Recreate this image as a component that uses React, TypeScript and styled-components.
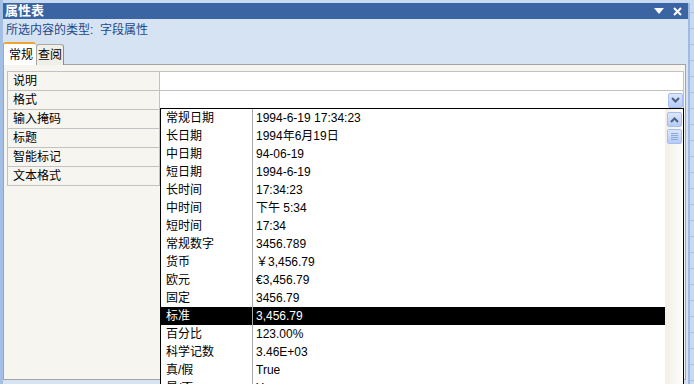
import { Fragment } from 'react'
import styled, { createGlobalStyle } from 'styled-components'

const GlobalStyle = createGlobalStyle`
  html, body {
    margin: 0;
    padding: 0;
  }
  body {
    width: 694px;
    height: 384px;
    overflow: hidden;
    background: #c8daf1;
    font-family: "Liberation Sans", "Noto Sans CJK SC", sans-serif;
    font-size: 12px;
    line-height: 14px;
    color: #000;
  }
`

const Frame = styled.div`
  position: relative;
  width: 694px;
  height: 384px;
  overflow: hidden;
  box-sizing: border-box;
  padding-top: 3px;
  border-left: 3px solid #a3bfe6;
  background: #c8daf1;

  &::after {
    content: '';
    position: absolute;
    right: 0;
    top: 0;
    width: 4px;
    height: 100%;
    background: repeating-linear-gradient(to bottom, transparent 0 12px, #b4bfcc 12px 13px, transparent 13px 16px);
  }
`

const Window = styled.div`
  width: 687px;
  height: 381px;
  box-sizing: border-box;
  display: flex;
  flex-direction: column;
  background: #d5e3f3;
  border-right: 2px solid #9dbbe6;
`

const TitleBar = styled.div`
  height: 16px;
  display: flex;
  align-items: center;
  padding: 0 6px 0 2px;
  background: #3b64a2;
  color: #fff;
  font-weight: bold;
  font-size: 13px;

  span {
    flex: 1;
  }
`

const TitleButtons = styled.div`
  display: flex;
  align-items: center;
  gap: 9px;
`

const TypeLabel = styled.div`
  height: 22px;
  display: flex;
  align-items: center;
  padding-left: 3px;
  color: #23498a;
  white-space: pre;
`

const TabRow = styled.div`
  height: 23px;
  display: flex;
  align-items: flex-end;
`

const Tab = styled.div<{ $active?: boolean }>`
  box-sizing: border-box;
  display: flex;
  align-items: center;
  white-space: nowrap;
  height: ${p => (p.$active ? '23px' : '21px')};
  width: ${p => (p.$active ? '33px' : '28px')};
  padding-left: ${p => (p.$active ? '5px' : '1px')};
  background: ${p => (p.$active ? '#fff' : '#efeee7')};
  border-top: ${p => (p.$active ? '2px solid #f0a533' : '1px solid #a8a8a8')};
  border-left: 1px solid #a8a8a8;
  border-right: ${p => (p.$active ? 'none' : '1px solid #8e8e8e')};
  border-radius: 3px 3px 0 0;
  position: relative;
  z-index: 1;
  margin-bottom: -1px;
`

const Panel = styled.div`
  flex: 1;
  margin: 0 2px 4px 0;
  padding: 6px 1px 0 3px;
  border: 1px solid #a4a4a4;
  background: #f6f5f0;
`

const Grid = styled.div`
  display: grid;
  grid-template-columns: 152px 1fr;
  border-top: 1px solid #c2c2c2;
  border-left: 1px solid #c2c2c2;
  border-right: 1px solid #c2c2c2;
`

const LabelCell = styled.div`
  box-sizing: border-box;
  height: 19px;
  display: flex;
  align-items: center;
  padding-left: 5px;
  border-right: 1px solid #c2c2c2;
  border-bottom: 1px solid #c2c2c2;
`

const ValueCell = styled.div`
  box-sizing: border-box;
  height: 19px;
  display: flex;
  align-items: center;
  justify-content: flex-end;
  background: #fff;
  border-bottom: 1px solid #c2c2c2;
`

const SmallButton = styled.div`
  box-sizing: border-box;
  width: 15px;
  height: 15px;
  display: flex;
  align-items: center;
  justify-content: center;
  background: linear-gradient(#dbe6fc, #b7ccf5);
  border: 1px solid #a7bdee;
  border-radius: 2px;
`

const DropList = styled.div`
  position: absolute;
  left: 157px;
  top: 108px;
  width: 524px;
  height: 300px;
  box-sizing: border-box;
  display: flex;
  background: #fff;
  border: 1px solid #000;
`

const Items = styled.div`
  flex: 1;
`

const Item = styled.div<{ $selected?: boolean }>`
  display: grid;
  grid-template-columns: 92px 1fr;
  height: 18px;
  background: ${p => (p.$selected ? '#000' : '#fff')};
  color: ${p => (p.$selected ? '#fff' : '#000')};
`

const ItemName = styled.div`
  display: flex;
  align-items: center;
  padding-left: 5px;
  border-right: 1px solid #a9a9a9;
`

const ItemValue = styled.div`
  display: flex;
  align-items: center;
  padding-left: 3px;
`

const ScrollBar = styled.div`
  width: 18px;
  box-sizing: border-box;
  padding: 3px 1px 0 2px;
  display: flex;
  flex-direction: column;
  gap: 2px;
  background: linear-gradient(to right, #f1efe6, #fdfdfb);
`

const Chevron = ({ up }: { up?: boolean }) => (
  <svg width="9" height="6" viewBox="0 0 9 6">
    <polyline
      points={up ? '1,5 4.5,1.5 8,5' : '1,1 4.5,4.5 8,1'}
      fill="none"
      stroke="#4b5f86"
      strokeWidth="2"
    />
  </svg>
)

const Grip = () => (
  <svg width="7" height="8" viewBox="0 0 7 8">
    {[0.5, 2.5, 4.5, 6.5].map(y => (
      <line key={y} x1="0" x2="7" y1={y} y2={y} stroke="#8ea8df" strokeWidth="1" />
    ))}
  </svg>
)

const rows = ['说明', '格式', '输入掩码', '标题', '智能标记', '文本格式']

const formats: [string, string][] = [
  ['常规日期', '1994-6-19 17:34:23'],
  ['长日期', '1994年6月19日'],
  ['中日期', '94-06-19'],
  ['短日期', '1994-6-19'],
  ['长时间', '17:34:23'],
  ['中时间', '下午 5:34'],
  ['短时间', '17:34'],
  ['常规数字', '3456.789'],
  ['货币', '￥3,456.79'],
  ['欧元', '€3,456.79'],
  ['固定', '3456.79'],
  ['标准', '3,456.79'],
  ['百分比', '123.00%'],
  ['科学记数', '3.46E+03'],
  ['真/假', 'True'],
  ['是/否', 'Yes'],
]

export default function App() {
  return (
    <>
      <GlobalStyle />
      <Frame>
        <Window>
          <TitleBar>
            <span>属性表</span>
            <TitleButtons>
              <svg width="10" height="6" viewBox="0 0 10 6">
                <polygon points="0,0 10,0 5,6" fill="#fff" />
              </svg>
              <svg width="9" height="9" viewBox="0 0 9 9">
                <path d="M1 1 L8 8 M8 1 L1 8" stroke="#fff" strokeWidth="2" />
              </svg>
            </TitleButtons>
          </TitleBar>
          <TypeLabel>{'所选内容的类型:  字段属性'}</TypeLabel>
          <TabRow>
            <Tab $active>常规</Tab>
            <Tab>查阅</Tab>
          </TabRow>
          <Panel>
            <Grid>
              {rows.map(r => (
                <Fragment key={r}>
                  <LabelCell>{r}</LabelCell>
                  <ValueCell>
                    {r === '格式' && (
                      <SmallButton>
                        <Chevron />
                      </SmallButton>
                    )}
                  </ValueCell>
                </Fragment>
              ))}
            </Grid>
          </Panel>
        </Window>
        <DropList>
          <Items>
            {formats.map(([name, value]) => (
              <Item key={name} $selected={name === '标准'}>
                <ItemName>{name}</ItemName>
                <ItemValue>{value}</ItemValue>
              </Item>
            ))}
          </Items>
          <ScrollBar>
            <SmallButton>
              <Chevron up />
            </SmallButton>
            <SmallButton>
              <Grip />
            </SmallButton>
          </ScrollBar>
        </DropList>
      </Frame>
    </>
  )
}
